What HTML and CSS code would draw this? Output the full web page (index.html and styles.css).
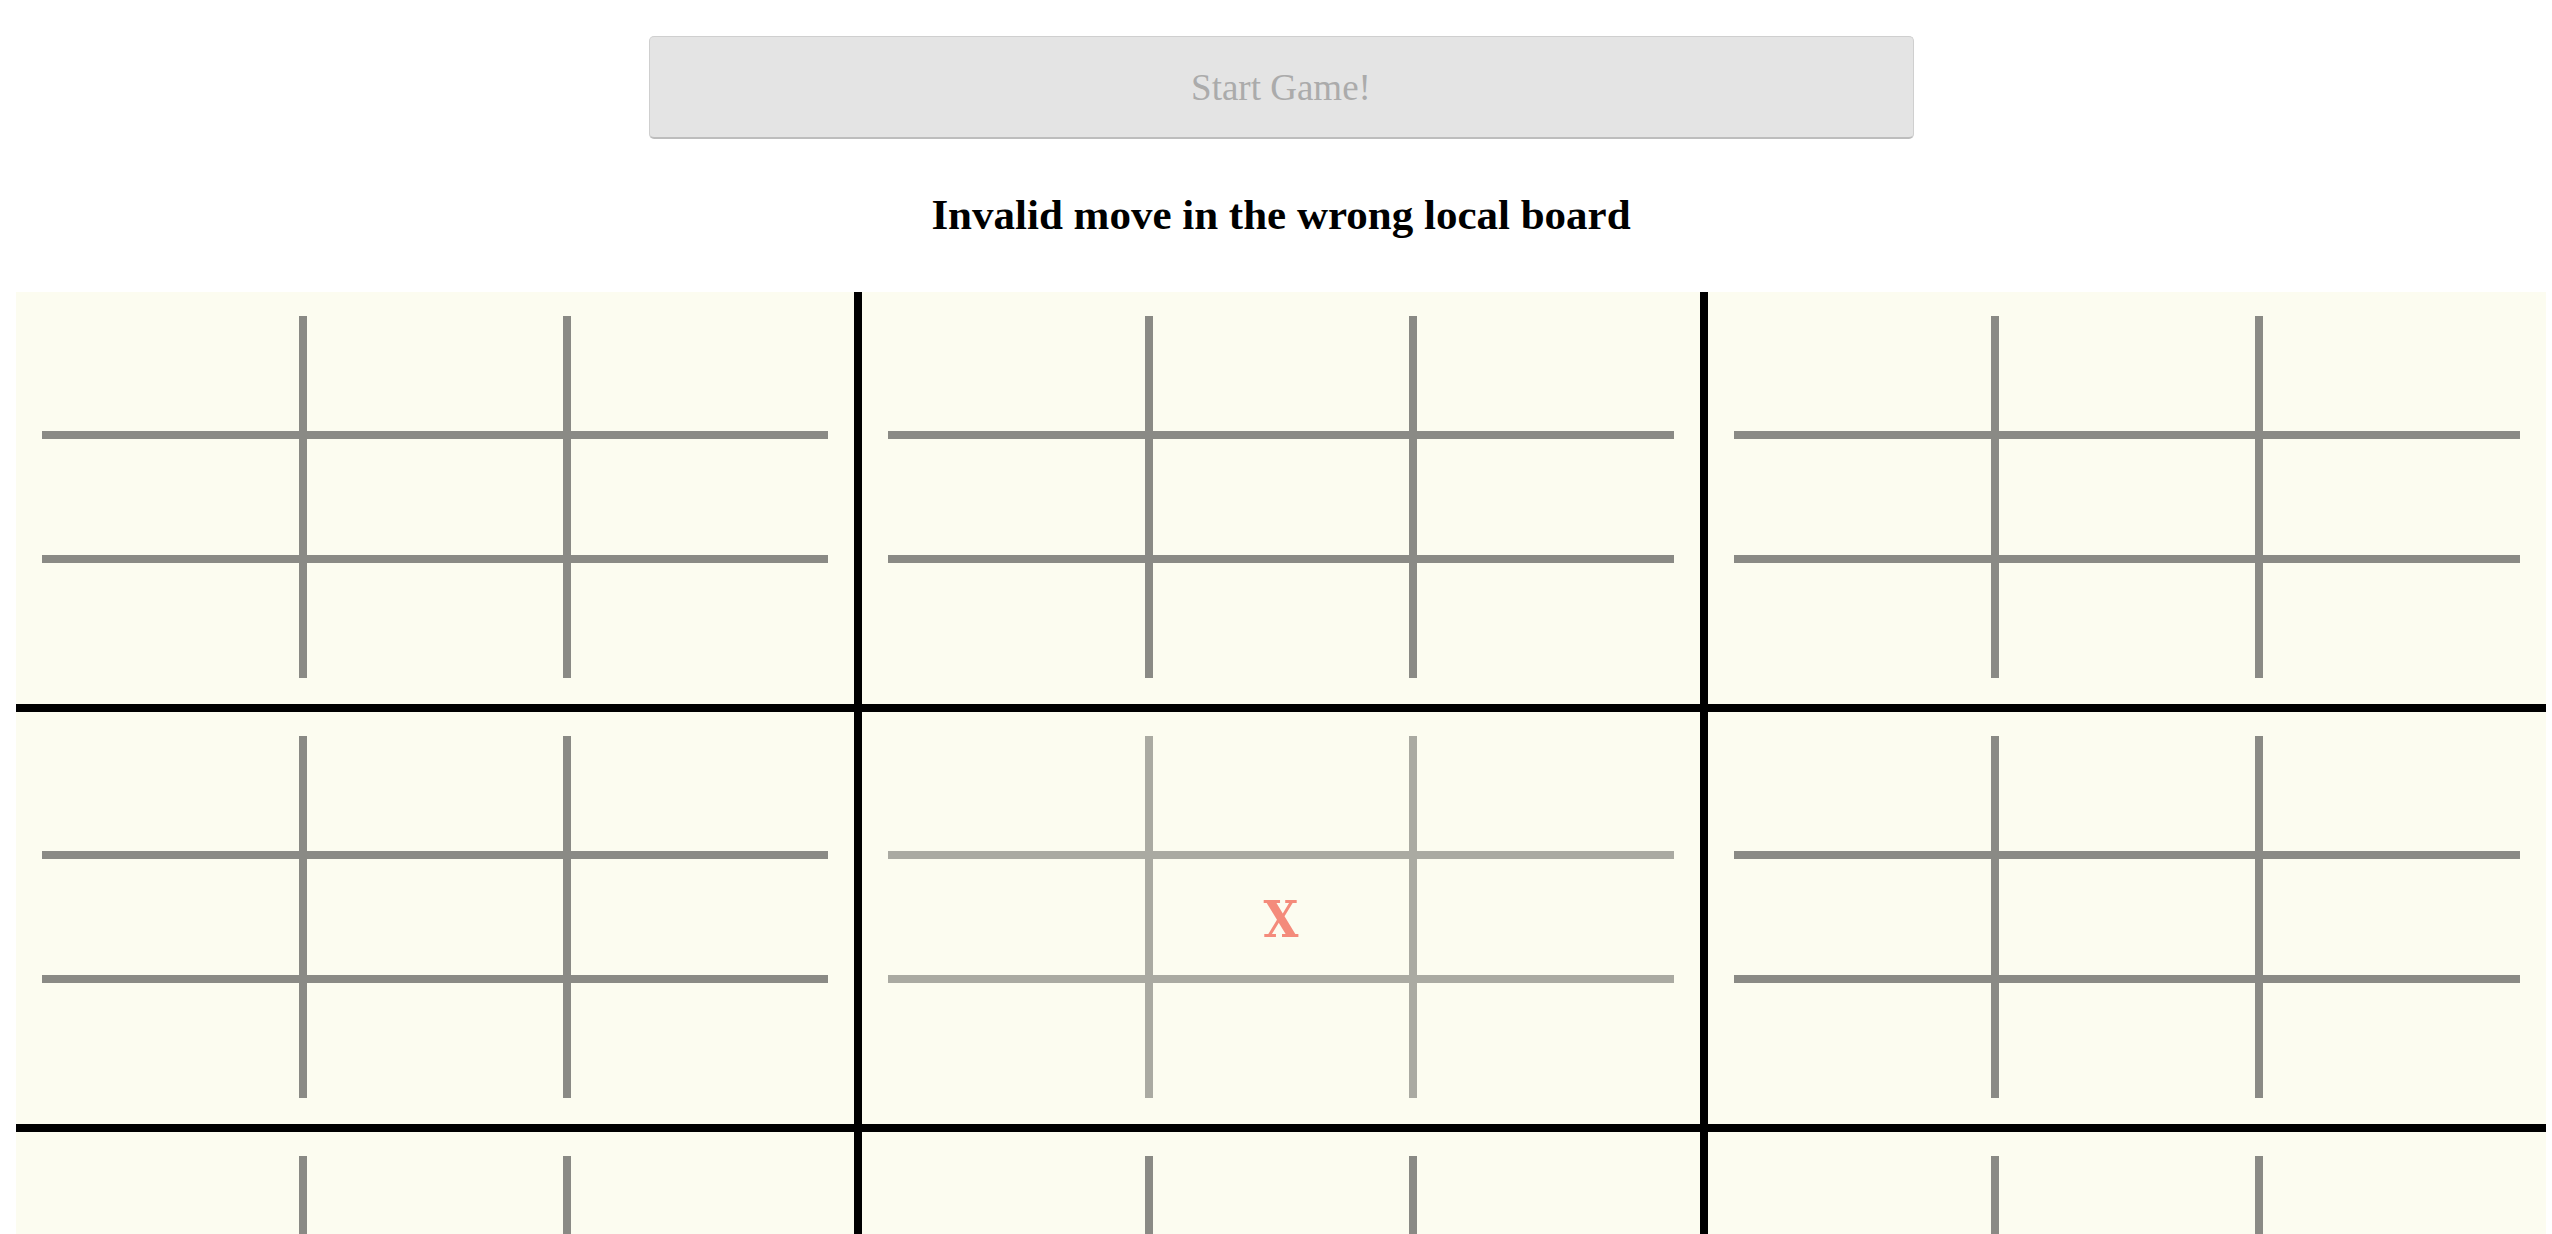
FILE: index.html
```html
<!DOCTYPE html>
<html>
<head>
<meta charset="utf-8">
<title>Ultimate Tic-Tac-Toe</title>
<link rel="stylesheet" href="styles.css">
</head>
<body>
<main class="page">
  <button class="start-btn" disabled>Start Game!</button>
  <h2 class="status">Invalid move in the wrong local board</h2>
  <section class="board">
    <div class="local"><div class="grid"><div class="cell"></div><div class="cell"></div><div class="cell"></div><div class="cell"></div><div class="cell"></div><div class="cell"></div><div class="cell"></div><div class="cell"></div><div class="cell"></div></div></div>
    <div class="local"><div class="grid"><div class="cell"></div><div class="cell"></div><div class="cell"></div><div class="cell"></div><div class="cell"></div><div class="cell"></div><div class="cell"></div><div class="cell"></div><div class="cell"></div></div></div>
    <div class="local"><div class="grid"><div class="cell"></div><div class="cell"></div><div class="cell"></div><div class="cell"></div><div class="cell"></div><div class="cell"></div><div class="cell"></div><div class="cell"></div><div class="cell"></div></div></div>
    <div class="local"><div class="grid"><div class="cell"></div><div class="cell"></div><div class="cell"></div><div class="cell"></div><div class="cell"></div><div class="cell"></div><div class="cell"></div><div class="cell"></div><div class="cell"></div></div></div>
    <div class="local local-dim"><div class="grid"><div class="cell"></div><div class="cell"></div><div class="cell"></div><div class="cell"></div><div class="cell mark">X</div><div class="cell"></div><div class="cell"></div><div class="cell"></div><div class="cell"></div></div></div>
    <div class="local"><div class="grid"><div class="cell"></div><div class="cell"></div><div class="cell"></div><div class="cell"></div><div class="cell"></div><div class="cell"></div><div class="cell"></div><div class="cell"></div><div class="cell"></div></div></div>
    <div class="local"><div class="grid"><div class="cell"></div><div class="cell"></div><div class="cell"></div><div class="cell"></div><div class="cell"></div><div class="cell"></div><div class="cell"></div><div class="cell"></div><div class="cell"></div></div></div>
    <div class="local"><div class="grid"><div class="cell"></div><div class="cell"></div><div class="cell"></div><div class="cell"></div><div class="cell"></div><div class="cell"></div><div class="cell"></div><div class="cell"></div><div class="cell"></div></div></div>
    <div class="local"><div class="grid"><div class="cell"></div><div class="cell"></div><div class="cell"></div><div class="cell"></div><div class="cell"></div><div class="cell"></div><div class="cell"></div><div class="cell"></div><div class="cell"></div></div></div>
  </section>
</main>
</body>
</html>
```

FILE: styles.css
```css
html, body {
  margin: 0;
  padding: 0;
  overflow: hidden;
  background: #ffffff;
}

.page {
  padding: 36px 6px 0 16px;
  font-family: "Liberation Serif", "DejaVu Serif", serif;
}

.start-btn {
  display: block;
  box-sizing: border-box;
  width: 50%;
  height: 103px;
  margin: 0 auto;
  border: 1px solid #cfcfcf;
  border-bottom: 2px solid #bdbdbd;
  border-radius: 5px;
  background: #e4e4e4;
  color: #ababab;
  font-family: "Liberation Serif", "DejaVu Serif", serif;
  font-size: 37px;
  padding: 0;
}

.status {
  margin: 51px 0 52px;
  height: 50px;
  line-height: 50px;
  text-align: center;
  font-size: 43px;
  font-weight: bold;
  color: #000;
}

.board {
  display: grid;
  grid-template-columns: repeat(3, 1fr);
  grid-auto-rows: 412px;
  gap: 8px;
  background: #000;
}

.local {
  background: #fcfcf0;
  padding: 24px 26px 26px 26px;
  display: flex;
}

.grid {
  flex: 1;
  display: grid;
  grid-template-columns: repeat(3, 1fr);
  grid-template-rows: repeat(3, 1fr);
  gap: 8px;
  background: #8a8a85;
}

.local-dim .grid {
  background: #aaaaa2;
}

.cell {
  background: #fcfcf0;
  display: flex;
  align-items: center;
  justify-content: center;
}

.mark {
  font-family: "DejaVu Serif", "Liberation Serif", serif;
  font-stretch: condensed;
  font-weight: bold;
  font-size: 50px;
  line-height: 1;
  padding-top: 6px;
  color: #f48b7b;
}
```
